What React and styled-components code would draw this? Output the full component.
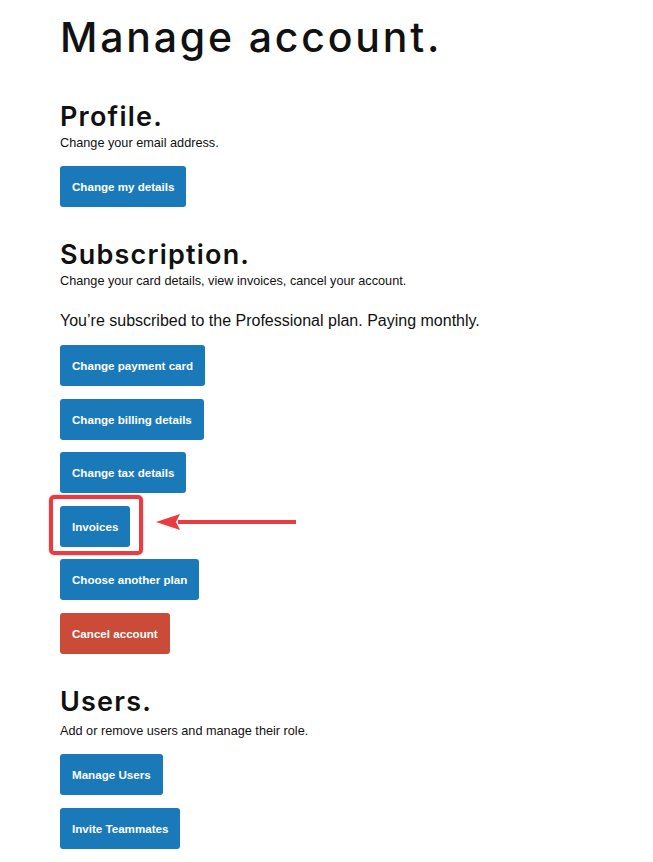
import React from 'react'
import styled, { createGlobalStyle } from 'styled-components'

const Global = createGlobalStyle`
  body {
    margin: 0;
    background: #fff;
    font-family: "Liberation Sans", Arial, sans-serif;
    color: #111;
  }
`

const Page = styled.main`
  padding: 12px 0 0 60px;
`

const Title = styled.h1`
  margin: 0 0 37px;
  font-family: Inter, "Noto Sans", sans-serif;
  font-weight: 500;
  font-size: 41px;
  line-height: 50px;
  letter-spacing: 2.8px;
  color: #111;
`

const Section = styled.section`
  margin-bottom: 30px;
`

const Heading = styled.h2`
  margin: 0 0 ${p => p.$gap || 0}px;
  font-family: Inter, "Noto Sans", sans-serif;
  font-weight: 600;
  font-size: 27px;
  line-height: 36px;
  letter-spacing: 1.2px;
  color: #111;
`

const Lead = styled.p`
  margin: 0 0 ${p => (p.$spaced ? 22 : 15)}px;
  font-size: 12.7px;
  line-height: 16px;
`

const Status = styled.p`
  margin: 0 0 14px;
  font-size: 16px;
  line-height: 20px;
`

const Actions = styled.div`
  display: flex;
  flex-direction: column;
  align-items: flex-start;
  gap: 12.6px;
`

const Button = styled.button`
  height: 41px;
  padding: 0 12px;
  border: none;
  border-radius: 3px;
  background: ${p => (p.$danger ? '#c94b38' : '#1a79b9')};
  color: #fff;
  font-family: "Liberation Sans", Arial, sans-serif;
  font-weight: 700;
  font-size: 11.6px;
  cursor: pointer;
`

const Marked = styled.div`
  position: relative;
  display: flex;
  align-items: center;
`

const Highlight = styled.span`
  position: absolute;
  left: -11px;
  top: -11px;
  width: 86px;
  height: 52px;
  border: 4px solid #ea3b40;
  border-radius: 5px;
  box-shadow: 0 0 2px rgba(0, 0, 0, 0.35);
  pointer-events: none;
`

const Arrow = styled.svg`
  position: absolute;
  left: 96px;
  top: 7px;
`

export default function App() {
  return (
    <Page>
      <Global />
      <Title>Manage account.</Title>

      <Section>
        <Heading>Profile.</Heading>
        <Lead>Change your email address.</Lead>
        <Actions>
          <Button>Change my details</Button>
        </Actions>
      </Section>

      <Section>
        <Heading>Subscription.</Heading>
        <Lead $spaced>Change your card details, view invoices, cancel your account.</Lead>
        <Status>You’re subscribed to the Professional plan. Paying monthly.</Status>
        <Actions>
          <Button>Change payment card</Button>
          <Button>Change billing details</Button>
          <Button>Change tax details</Button>
          <Marked>
            <Button>Invoices</Button>
            <Highlight />
            <Arrow width="142" height="18" viewBox="0 0 142 18">
              <path d="M22 7 H140 V11 H22 Z" fill="#ea3b40" />
              <path d="M0 9 L24 1 L20 9 L24 17 Z" fill="#ea3b40" />
            </Arrow>
          </Marked>
          <Button>Choose another plan</Button>
          <Button $danger>Cancel account</Button>
        </Actions>
      </Section>

      <Section>
        <Heading $gap={3}>Users.</Heading>
        <Lead>Add or remove users and manage their role.</Lead>
        <Actions>
          <Button>Manage Users</Button>
          <Button>Invite Teammates</Button>
        </Actions>
      </Section>
    </Page>
  )
}
